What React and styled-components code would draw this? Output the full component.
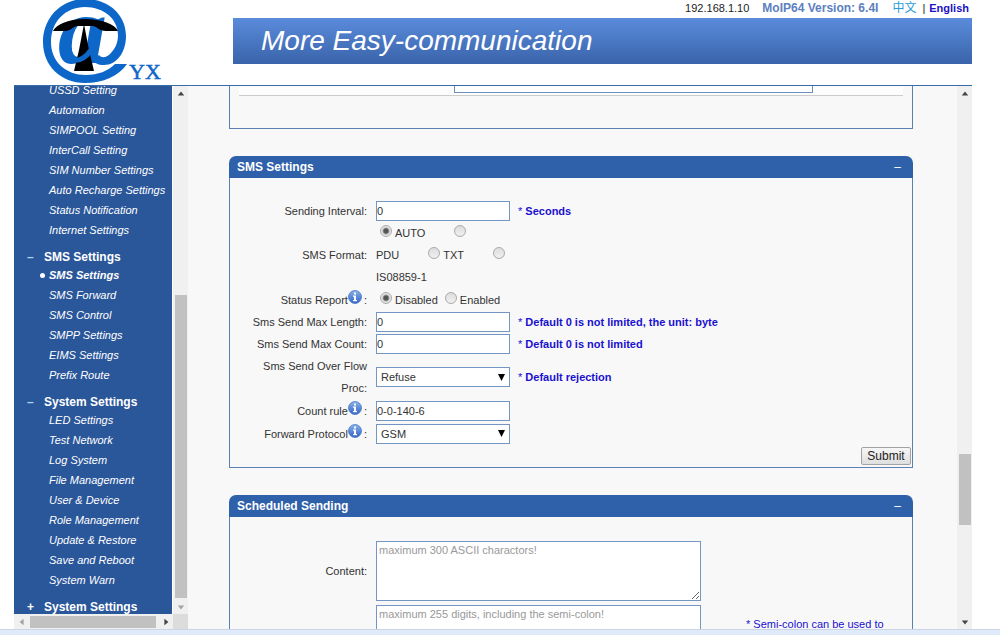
import React from "react";
import styled, { createGlobalStyle } from "styled-components";

const GlobalStyle = createGlobalStyle`
  *, *::before, *::after { box-sizing: border-box; }
  body {
    margin: 0;
    background: #fff;
    color: #333;
    font: 11px/22px "Liberation Sans", "Noto Sans CJK SC", sans-serif;
  }
  button, input, select, textarea { font: inherit; color: inherit; }
  a { text-decoration: none; }
`;

const Page = styled.div`
  height: 100vh;
  display: flex;
  flex-direction: column;
  overflow: hidden;
`;

const Header = styled.header`
  height: 86px;
  flex: none;
  display: flex;
  margin: 0 28px 0 14px;
  border-bottom: 1px solid #3b6ba5;
`;

const LogoCell = styled.div`
  width: 219px;
  flex: none;
  padding-left: 24px;
`;

const HeaderMain = styled.div`
  flex: 1;
`;

const TopLinks = styled.div`
  height: 18px;
  display: flex;
  justify-content: flex-end;
  line-height: 16px;
  padding-right: 3px;
`;

const Address = styled.span`
  margin-right: 13px;
  color: #222;
`;

const Version = styled.strong`
  margin-right: 14px;
  color: #5c80bf;
  font-size: 12px;
`;

const Lang = styled.a`
  color: ${(p) => (p.$active ? "#1b12c4" : "#2a9bd6")};
  font-size: ${(p) => (p.$active ? 11 : 12)}px;
  font-weight: ${(p) => (p.$active ? 700 : 400)};
`;

const Divider = styled.span`
  margin: 0 4px 0 6px;
  color: #222;
`;

const Banner = styled.h1`
  margin: 0;
  height: 46px;
  padding-left: 28px;
  background: linear-gradient(#5a8bdb, #3a64aa);
  color: #fff;
  font-size: 28px;
  font-style: italic;
  font-weight: 400;
  line-height: 46px;
`;

const Workspace = styled.div`
  flex: 1;
  min-height: 0;
  display: flex;
  margin: 0 28px 0 14px;
  background: #f8f8f8;
`;

const StatusStrip = styled.footer`
  flex: none;
  height: 6px;
  background: #dfeafb;
  border-top: 1px solid #cdd5e4;
`;

const Sidebar = styled.aside`
  flex: none;
  width: 174px;
  display: grid;
  grid-template-columns: 1fr 15px;
  grid-template-rows: 1fr 15px;
`;

const Nav = styled.nav`
  overflow: hidden;
  background: #2a569a;
  color: #fff;
  border-right: 1px solid #fff;
`;

const NavScrolled = styled.div`
  margin-top: -6px;
`;

const NavGroup = styled.button`
  display: flex;
  width: 100%;
  height: 25px;
  padding: 9px 0 0 13px;
  border: 0;
  background: none;
  font-size: 12px;
  font-weight: 700;
  line-height: 16px;
  text-align: left;
  white-space: nowrap;
`;

const GroupSign = styled.span`
  width: 17px;
  flex: none;
  color: ${(p) => (p.$open ? "#a9d4ee" : "#fff")};
`;

const NavList = styled.ul`
  margin: 0;
  padding: 0 0 0 27px;
  list-style: none;
`;

const NavItem = styled.li`
  height: 20px;
  display: flex;
  align-items: center;
  line-height: 20px;
`;

const Bullet = styled.span`
  width: 5px;
  height: 5px;
  margin: 0 4px 0 -1px;
  border-radius: 50%;
  background: ${(p) => (p.$on ? "#fff" : "transparent")};
`;

const NavLink = styled.a`
  color: #fff;
  font-style: italic;
  font-weight: ${(p) => (p.$on ? 700 : 400)};
  white-space: nowrap;
`;

const Track = styled.div`
  display: flex;
  flex-direction: ${(p) => (p.$horizontal ? "row" : "column")};
  background: #f0f0f0;
`;

const Corner = styled.div`
  background: #dcdcdc;
`;

const ArrowButton = styled.button`
  flex: none;
  width: 15px;
  height: 15px;
  display: grid;
  place-items: center;
  padding: 0;
  border: 0;
  background: none;
  color: ${(p) => (p.$dim ? "#a3a3a3" : "#444")};
`;

const Rail = styled.div`
  flex: ${(p) => p.$grow} 1 0;
`;

const Thumb = styled.div`
  flex: ${(p) => p.$grow} 1 0;
  margin: ${(p) => (p.$horizontal ? "2px 0 1px" : "0 1px 0 2px")};
  background: #c1c1c1;
`;

const Content = styled.main`
  flex: 1;
  min-width: 0;
  overflow: hidden;
  padding: 0 44px 0 41px;
`;

const Panel = styled.section`
  margin-bottom: 27px;
`;

const PanelHeader = styled.header`
  height: 22px;
  display: flex;
  justify-content: space-between;
  padding: 0 12px 0 8px;
  border-radius: 7px 7px 0 0;
  background: #2f60aa;
  color: #fff;
`;

const PanelTitle = styled.h2`
  margin: 0;
  font-size: 12px;
  font-weight: 700;
  line-height: 22px;
`;

const Collapse = styled.button`
  padding: 0;
  border: 0;
  background: none;
  color: #fff;
  font-size: 12px;
  line-height: 20px;
`;

const PanelBody = styled.div`
  border: 1px solid #5a80b4;
  border-top: 0;
  padding: ${(p) => (p.$form ? "22px 1px 2px" : "0 9px")};
`;

const CutForm = styled.form`
  height: 42px;
`;

const CutField = styled.div`
  height: 10px;
  padding: 0 90px 0 215px;
  border-bottom: 1px solid #ccc;
  background: #fdfdfd;
`;

const CutInput = styled.input`
  display: block;
  width: 100%;
  height: 7px;
  padding: 0;
  border: 1px solid #6d8fbc;
  border-top: 0;
  background: #fff;
`;

const Row = styled.div`
  display: flex;
  align-items: center;
  min-height: ${(p) => (p.$tall ? 23 : 22)}px;
  padding: ${(p) => (p.$wide ? 2 : 0)}px 0;
`;

const LabelCell = styled.div`
  flex: none;
  width: 136px;
  margin-right: 9px;
  padding-left: 12px;
  text-align: right;
`;

const Control = styled.div`
  flex: none;
  width: ${(p) => (p.$wide ? 325 : 134)}px;
`;

const Hint = styled.span`
  align-self: ${(p) => (p.$far ? "flex-start" : "center")};
  padding: ${(p) => (p.$far ? "8px 0 0 45px" : "0 0 0 8px")};
  color: #1a10d0;
  font-weight: ${(p) => (p.$far ? 400 : 700)};
`;

const Star = styled.span`
  font-weight: 400;
`;

const TextBox = styled.input`
  display: block;
  width: 100%;
  height: 20px;
  padding: 0;
  border: 1px solid #7396c4;
  background: #fff;
`;

const Picker = styled.div`
  display: grid;
  align-items: center;
  > * { grid-area: 1 / 1; }
  > svg { justify-self: end; margin-right: 5px; pointer-events: none; }
`;

const Select = styled.select`
  appearance: none;
  width: 100%;
  height: 20px;
  padding: 0 4px;
  border: 1px solid #7396c4;
  border-radius: 0;
  background: #fff;
  line-height: 18px;
`;

const TextArea = styled.textarea`
  display: block;
  width: 100%;
  height: 60px;
  padding: 0 2px;
  border: 1px solid #7396c4;
  background: #fff;
  line-height: 16px;
  &::placeholder { color: #999; }
`;

const Radio = styled.input`
  appearance: none;
  width: 12px;
  height: 12px;
  margin: 0 3px 0 4px;
  border: 1px solid #aaa;
  border-radius: 50%;
  background: ${(p) =>
    p.defaultChecked
      ? "radial-gradient(#555 0 2px, #e6e6e6 4px)"
      : "linear-gradient(#ddd, #f0f0f0)"};
  vertical-align: baseline;
`;

const OptionText = styled.span`
  display: inline-block;
  padding-right: ${(p) => (p.$spread ? 25 : 3)}px;
`;

const InfoSvg = styled.svg`
  width: 14px;
  height: 14px;
  vertical-align: baseline;
  margin-right: 2px;
`;

const Actions = styled.div`
  display: flex;
  justify-content: flex-end;
  padding-top: 2px;
`;

const Submit = styled.button`
  height: 18px;
  width: 50px;
  padding: 0;
  border: 1px solid #a3a3a3;
  border-radius: 2px;
  background: linear-gradient(#f6f6f6, #dedede);
  color: #222;
  font-size: 12px;
  line-height: 16px;
`;

const arrowPaths = {
  up: "M1 7 L5 2 L9 7 Z",
  down: "M1 3 L5 8 L9 3 Z",
  left: "M7 1 L2 5 L7 9 Z",
  right: "M3 1 L8 5 L3 9 Z",
};

function Arrow({ dir, dim }) {
  return (
    <ArrowButton type="button" $dim={dim} aria-label={`Scroll ${dir}`}>
      <svg width="8" height="8" viewBox="0 0 10 10">
        <path d={arrowPaths[dir]} fill="currentColor" />
      </svg>
    </ArrowButton>
  );
}

function ScrollBar({ horizontal, before, size, after, dimStart, dimEnd }) {
  return (
    <Track $horizontal={horizontal}>
      <Arrow dir={horizontal ? "left" : "up"} dim={dimStart} />
      <Rail $grow={before} />
      <Thumb $grow={size} $horizontal={horizontal} />
      <Rail $grow={after} />
      <Arrow dir={horizontal ? "right" : "down"} dim={dimEnd} />
    </Track>
  );
}

function Logo() {
  return (
    <svg width="126" height="85" viewBox="38 0 126 85" role="img" aria-label="@YX">
      <path
        d="M127 64 C119 76 103 83 85 83 C61 83 43 66 43 42 C43 18 61 -1 85 -1 C109 -1 126 15 126 36 C126 52 117 65 104 65 C98 65 94 63 92 59 L99 55 C102 59 107 57 110 54 C115 49 118 43 118 35 C118 19 104 7 85 7 C66 7 51 21 51 42 C51 62 66 75 86 75 C98 75 108 71 115 64 Z"
        fill="#0d67c9"
      />
      <text
        x="58"
        y="63"
        fontFamily="Liberation Serif, serif"
        fontSize="98"
        fontWeight="700"
        fontStyle="italic"
        fill="#0d67c9"
      >
        a
      </text>
      <path d="M84 24 L89 50 L94 71 H74 L79 50 Z" fill="#000" />
      <path d="M70 60 Q82 63 91 50" stroke="#0d67c9" strokeWidth="5" fill="none" />
      <path
        d="M53 31 C56 25 68 19 84 19 C102 19 115 24 118 31 H106 C99 31 98 27 93 26 H77 C72 27 71 31 65 31 Z"
        fill="#000"
      />
      <text x="129" y="79" fontFamily="Liberation Serif, serif" fontSize="22" fill="#0d67c9" stroke="#0d67c9" strokeWidth="0.5">
        YX
      </text>
    </svg>
  );
}

function Info() {
  return (
    <InfoSvg viewBox="0 0 14 14" aria-hidden="true">
      <defs>
        <linearGradient id="ball" x1="0" y1="0" x2="0" y2="1">
          <stop offset="0" stopColor="#8db3ea" />
          <stop offset="1" stopColor="#2f63c4" />
        </linearGradient>
      </defs>
      <circle cx="7" cy="7" r="6.5" fill="url(#ball)" stroke="#4b78c6" strokeWidth="0.8" />
      <path d="M6 2.6h2v2H6zM5 5.6h3v4.4h1v1.2H5v-1.2h1V6.8H5z" fill="#fff" />
    </InfoSvg>
  );
}

const earlierItems = [
  "USSD Setting",
  "Automation",
  "SIMPOOL Setting",
  "InterCall Setting",
  "SIM Number Settings",
  "Auto Recharge Settings",
  "Status Notification",
  "Internet Settings",
];
const smsItems = ["SMS Settings", "SMS Forward", "SMS Control", "SMPP Settings", "EIMS Settings", "Prefix Route"];
const systemItems = [
  "LED Settings",
  "Test Network",
  "Log System",
  "File Management",
  "User & Device",
  "Role Management",
  "Update & Restore",
  "Save and Reboot",
  "System Warn",
];

function Menu({ items, active }) {
  return (
    <NavList>
      {items.map((item) => (
        <NavItem key={item}>
          <Bullet $on={item === active} />
          <NavLink href="#" $on={item === active}>
            {item}
          </NavLink>
        </NavItem>
      ))}
    </NavList>
  );
}

function Group({ title, open }) {
  return (
    <NavGroup type="button" aria-expanded={!!open}>
      <GroupSign $open={open}>{open ? "–" : "+"}</GroupSign>
      {title}
    </NavGroup>
  );
}

function Field({ id, label, info, hint, far, wide, children }) {
  return (
    <Row $tall={info} $wide={wide}>
      <LabelCell>
        {label && (
          <label htmlFor={id}>
            {label}
            {info && <Info />}:
          </label>
        )}
      </LabelCell>
      <Control $wide={wide}>{children}</Control>
      {hint && (
        <Hint $far={far}>
          <Star>* </Star>
          {hint}
        </Hint>
      )}
    </Row>
  );
}

function Choice({ id, name, text, checked, spread }) {
  return (
    <label>
      <Radio id={id} type="radio" name={name} defaultChecked={checked} />
      <OptionText $spread={spread}>{text}</OptionText>
    </label>
  );
}

function Dropdown({ id, value }) {
  return (
    <Picker>
      <Select id={id} defaultValue={value}>
        <option>{value}</option>
      </Select>
      <svg width="7" height="7" viewBox="0 0 7 7">
        <path d="M0 0 H7 L3.5 7 Z" fill="#000" />
      </svg>
    </Picker>
  );
}

function TitledPanel({ title, children }) {
  return (
    <Panel>
      <PanelHeader>
        <PanelTitle>{title}</PanelTitle>
        <Collapse type="button" aria-label={`Collapse ${title}`}>
          –
        </Collapse>
      </PanelHeader>
      <PanelBody as="form" $form>
        {children}
      </PanelBody>
    </Panel>
  );
}

export default function App() {
  return (
    <Page>
      <GlobalStyle />
      <Header>
        <LogoCell>
          <Logo />
        </LogoCell>
        <HeaderMain>
          <TopLinks>
            <Address>192.168.1.10</Address>
            <Version>MoIP64 Version: 6.4I</Version>
            <Lang href="#">中文</Lang>
            <Divider>|</Divider>
            <Lang href="#" $active>
              English
            </Lang>
          </TopLinks>
          <Banner>More Easy-communication</Banner>
        </HeaderMain>
      </Header>
      <Workspace>
        <Sidebar>
          <Nav>
            <NavScrolled>
              <Menu items={earlierItems} />
              <Group title="SMS Settings" open />
              <Menu items={smsItems} active="SMS Settings" />
              <Group title="System Settings" open />
              <Menu items={systemItems} />
              <Group title="System Settings" />
            </NavScrolled>
          </Nav>
          <ScrollBar before={194} size={303} after={1} dimEnd />
          <ScrollBar horizontal before={1} size={125} after={2} dimStart />
          <Corner />
        </Sidebar>
        <Content>
          <Panel>
            <PanelBody>
              <CutForm>
                <CutField>
                  <CutInput aria-label="Value" />
                </CutField>
              </CutForm>
            </PanelBody>
          </Panel>
          <TitledPanel title="SMS Settings">
            <Field id="interval" label="Sending Interval" hint="Seconds">
              <TextBox id="interval" defaultValue="0" />
            </Field>
            <Field id="format" label="SMS Format">
              <Choice id="format" name="format" text="AUTO" checked spread />
              <Choice name="format" text="PDU" spread />
              <Choice name="format" text="TXT" spread />
              <Choice name="format" text="IS08859-1" />
            </Field>
            <Field id="report" label="Status Report" info>
              <Choice id="report" name="report" text="Disabled" checked />
              <Choice name="report" text="Enabled" />
            </Field>
            <Field id="length" label="Sms Send Max Length" hint="Default 0 is not limited, the unit: byte">
              <TextBox id="length" defaultValue="0" />
            </Field>
            <Field id="count" label="Sms Send Max Count" hint="Default 0 is not limited">
              <TextBox id="count" defaultValue="0" />
            </Field>
            <Field id="overflow" label="Sms Send Over Flow Proc" hint="Default rejection">
              <Dropdown id="overflow" value="Refuse" />
            </Field>
            <Field id="rule" label="Count rule" info>
              <TextBox id="rule" defaultValue="0-0-140-6" />
            </Field>
            <Field id="protocol" label="Forward Protocol" info>
              <Dropdown id="protocol" value="GSM" />
            </Field>
            <Actions>
              <Submit type="button">Submit</Submit>
            </Actions>
          </TitledPanel>
          <TitledPanel title="Scheduled Sending">
            <Field id="content" label="Content" wide>
              <TextArea id="content" placeholder="maximum 300 ASCII charactors!" />
            </Field>
            <Field wide far hint="Semi-colon can be used to">
              <TextArea aria-label="Numbers" placeholder="maximum 255 digits, including the semi-colon!" />
            </Field>
          </TitledPanel>
        </Content>
        <ScrollBar before={353} size={71} after={89} />
      </Workspace>
      <StatusStrip />
    </Page>
  );
}
